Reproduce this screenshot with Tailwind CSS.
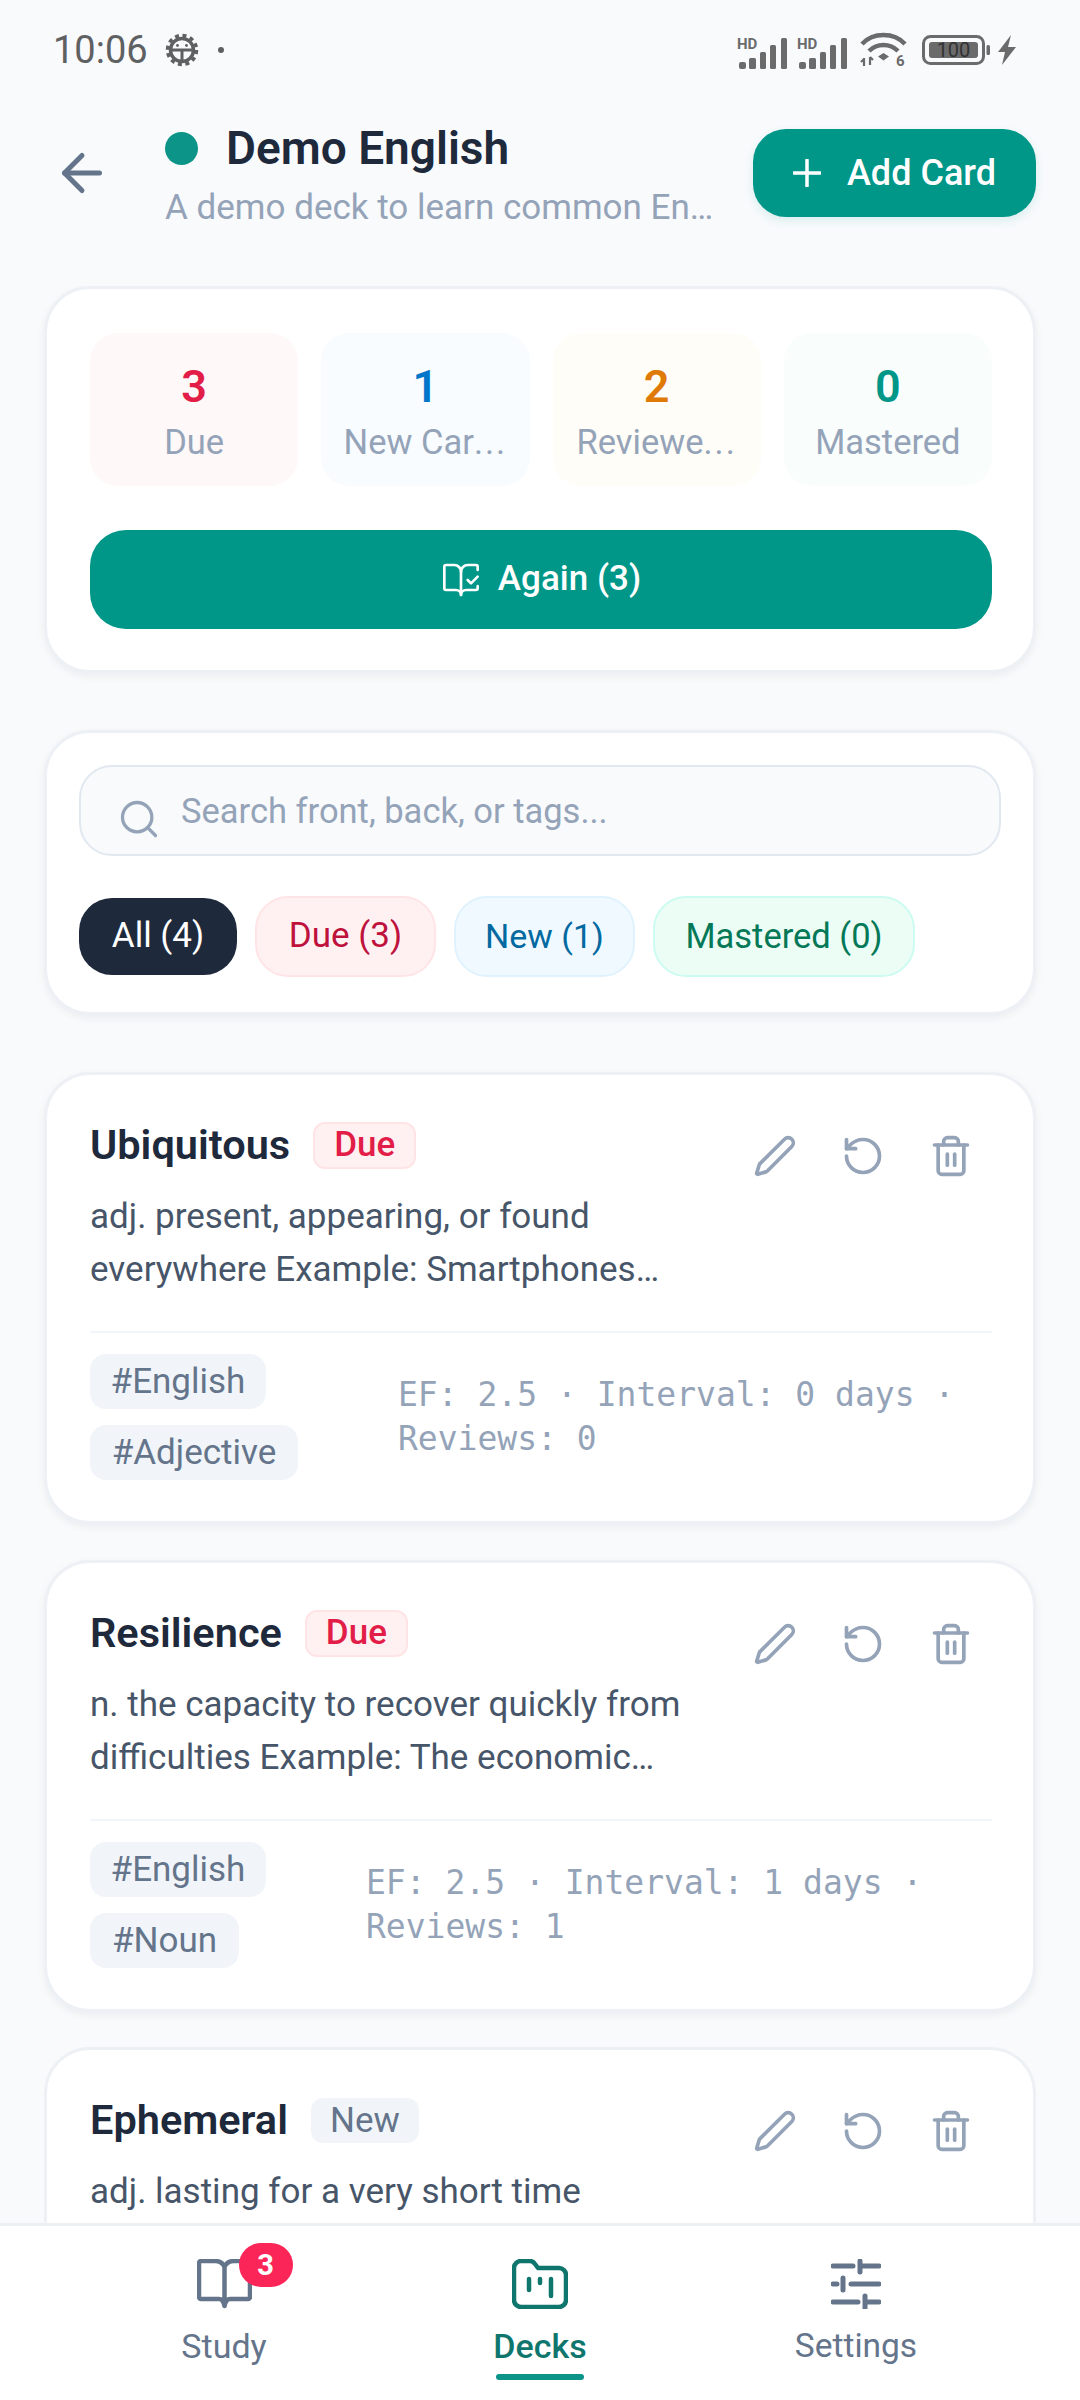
<!DOCTYPE html>
<html lang="en">
  <head>
    <meta charset="UTF-8" />
    <meta name="viewport" content="width=device-width, initial-scale=1.0" />
    <title>Demo English</title>
    <script src="https://cdn.jsdelivr.net/npm/@tailwindcss/browser@4"></script>
  </head>
  <body class="bg-[#f8fafc] text-[#1e293b] font-['Roboto',sans-serif]">
    <div class="w-[1080px] h-[2400px] flex flex-col overflow-hidden">
      <!-- Status bar -->
      <div class="h-[100px] shrink-0 flex items-center justify-between pl-[53px] pr-[63px] text-[#5f6062]">
        <div class="flex items-center">
          <span class="text-[38px] leading-none">10:06</span>
          <svg class="ml-[17px]" width="34" height="34" viewBox="0 0 34 34" fill="none" stroke="#5f6062">
            <circle cx="17" cy="17" r="11.5" stroke-width="3.5" />
            <circle cx="17" cy="17" r="14.5" stroke-width="3.5" stroke-dasharray="4 3.6" />
            <path d="M6 17h22M17 17v11" stroke-width="3" />
            <circle cx="12.5" cy="12.5" r="1.4" fill="#5f6062" stroke="none" />
            <circle cx="21.5" cy="12.5" r="1.4" fill="#5f6062" stroke="none" />
          </svg>
          <span class="ml-[19px] w-[6px] h-[6px] rounded-full bg-[#5f6062]"></span>
        </div>
        <div class="flex items-center">
          <svg width="50" height="38" viewBox="0 -6 50 38" fill="#6b6b6b">
            <text x="0" y="12" font-size="15" font-weight="700" font-family="Roboto">HD</text>
            <rect x="2" y="25" width="7" height="7" rx="2" />
            <rect x="12" y="21" width="7" height="11" rx="1.5" />
            <rect x="23" y="15" width="6" height="17" rx="1.5" />
            <rect x="33" y="8" width="6" height="24" rx="1.5" />
            <rect x="44" y="1" width="6" height="31" rx="1.5" />
          </svg>
          <svg class="ml-[10px]" width="50" height="38" viewBox="0 -6 50 38" fill="#6b6b6b">
            <text x="0" y="12" font-size="15" font-weight="700" font-family="Roboto">HD</text>
            <rect x="2" y="25" width="7" height="7" rx="2" />
            <rect x="12" y="21" width="7" height="11" rx="1.5" />
            <rect x="23" y="15" width="6" height="17" rx="1.5" />
            <rect x="33" y="8" width="6" height="24" rx="1.5" />
            <rect x="44" y="1" width="6" height="31" rx="1.5" />
          </svg>
          <svg class="ml-[13px] mt-[4px]" width="47" height="42" viewBox="0 0 47 42" fill="none" stroke="#6b6b6b">
            <path d="M2 13C13 1 34 1 45 13" stroke-width="4.5" />
            <path d="M9 20C17 12 30 12 38 20" stroke-width="4.5" />
            <path d="M18 25.500l5.500-3.500 5.500 3.500-5.500 4z" fill="#6b6b6b" stroke="none" />
            <path d="M4 27v8M1 31l3-3M10 26v8M10 26l3 3" stroke-width="2.200" />
            <text x="36" y="35" font-size="15" font-weight="700" font-family="Roboto" fill="#6b6b6b" stroke="none">6</text>
          </svg>
          <svg class="ml-[15px]" width="68" height="30" viewBox="0 0 68 30" fill="none">
            <rect x="1.500" y="1.500" width="60" height="27" rx="7" stroke="#6b6b6b" stroke-width="3" />
            <rect x="7" y="7" width="49" height="16" rx="3" fill="#6b6b6b" />
            <rect x="64.500" y="10" width="3.500" height="10" rx="1.500" fill="#6b6b6b" />
            <text x="31.500" y="22" text-anchor="middle" font-size="20" font-family="Roboto" fill="#333">100</text>
          </svg>
          <svg class="ml-[7px]" width="20" height="30" viewBox="0 0 20 30" fill="#6b6b6b">
            <path d="M14 0L1 17h7l-3 13L19 12h-8z" />
          </svg>
        </div>
      </div>

      <!-- Header -->
      <header class="shrink-0 h-[186px] flex items-start pt-[29px] pl-[52px] pr-[44px]">
        <svg class="mt-[14px]" width="60" height="60" viewBox="0 0 24 24" fill="none" stroke="#64748b" stroke-width="2" stroke-linecap="round" stroke-linejoin="round">
          <path d="m12 19-7-7 7-7" />
          <path d="M19 12H5" />
        </svg>
        <div class="ml-[53px] flex-1 min-w-0 -mt-[6px]">
          <div class="flex items-center gap-[28px] h-[50px]">
            <span class="w-[33px] h-[33px] rounded-full bg-[#0d9488]"></span>
            <h1 class="text-[46px] leading-none font-semibold">Demo English</h1>
          </div>
          <p class="text-[35px] leading-[44px] mt-[13px] text-[#94a3b8]">A demo deck to learn common En…</p>
        </div>
        <button class="w-[283px] h-[88px] rounded-[33px] bg-[#009688] text-white flex items-center justify-center gap-[26px] text-[36px] font-medium shadow-[0_4px_10px_rgba(0,150,136,0.12)]">
          <svg width="28" height="28" viewBox="0 0 28 28" fill="none" stroke="white" stroke-width="3.500" stroke-linecap="round">
            <path d="M14 1v26M1 14h26" />
          </svg>
          Add Card
        </button>
      </header>

      <main class="flex-1 min-h-0 overflow-hidden px-[44px] flex flex-col">
        <!-- Stats card -->
        <section class="shrink-0 h-[387px] bg-white rounded-[46px] border-[3px] border-[#edf1f5] shadow-[0_3px_8px_rgba(15,23,42,0.06)] pl-[43px] pr-[41px] pt-[44px]">
          <div class="grid grid-cols-4 gap-[23px]">
            <div class="h-[153px] rounded-[28px] bg-[#fff8f8] flex flex-col items-center pt-[29px]">
              <span class="text-[45px] leading-[50px] font-semibold text-[#e11d48]">3</span>
              <span class="text-[34.5px] leading-[44px] mt-[8px] text-[#94a3b8]">Due</span>
            </div>
            <div class="h-[153px] rounded-[28px] bg-[#f8fcff] flex flex-col items-center pt-[29px]">
              <span class="text-[45px] leading-[50px] font-semibold text-[#0277c9]">1</span>
              <span class="text-[34.5px] leading-[44px] mt-[8px] text-[#94a3b8]">New Car<span class="tracking-[2px]">...</span></span>
            </div>
            <div class="h-[153px] rounded-[28px] bg-[#fffdf7] flex flex-col items-center pt-[29px]">
              <span class="text-[45px] leading-[50px] font-semibold text-[#df7a07]">2</span>
              <span class="text-[34.5px] leading-[44px] mt-[8px] text-[#94a3b8]">Reviewe<span class="tracking-[2px]">...</span></span>
            </div>
            <div class="h-[153px] rounded-[28px] bg-[#f9fdfc] flex flex-col items-center pt-[29px]">
              <span class="text-[45px] leading-[50px] font-semibold text-[#009688]">0</span>
              <span class="text-[34.5px] leading-[44px] mt-[8px] text-[#94a3b8]">Mastered</span>
            </div>
          </div>
          <button class="mt-[44px] w-full h-[99px] rounded-[36px] bg-[#009688] text-white flex items-center justify-center gap-[17px] text-[35px] font-medium">
            <svg width="40" height="40" viewBox="0 0 24 24" fill="none" stroke="white" stroke-width="1.600" stroke-linecap="round" stroke-linejoin="round">
              <path d="M12 21V7" />
              <path d="m16 12 2 2 4-4" />
              <path d="M22 6V4a1 1 0 0 0-1-1h-5a4 4 0 0 0-4 4 4 4 0 0 0-4-4H3a1 1 0 0 0-1 1v13a1 1 0 0 0 1 1h6a3 3 0 0 1 3 3 3 3 0 0 1 3-3h6a1 1 0 0 0 1-1v-1.300" />
            </svg>
            Again (3)
          </button>
        </section>

        <!-- Search and filters -->
        <section class="shrink-0 mt-[57px] h-[285px] bg-white rounded-[46px] border-[3px] border-[#edf1f5] shadow-[0_3px_8px_rgba(15,23,42,0.06)] pl-[32px] pr-[32px] pt-[32px]">
          <div class="h-[91px] rounded-[33px] border-[2px] border-[#e2e8f0] bg-[#f8fafc] flex items-center pl-[36px]">
            <svg class="mt-[16px]" width="44" height="44" viewBox="0 0 24 24" fill="none" stroke="#94a3b8" stroke-width="1.800" stroke-linecap="round">
              <circle cx="11" cy="11" r="8" />
              <path d="m21 21-4.300-4.300" />
            </svg>
            <span class="ml-[20px] text-[34.5px] text-[#94a3b8] mt-[3px]">Search front, back, or tags...</span>
          </div>
          <div class="mt-[40px] flex items-center gap-[18px]">
            <button class="h-[77px] w-[158px] rounded-[33px] bg-[#1e293b] text-white text-[35px]">All (4)</button>
            <button class="h-[81px] w-[181px] rounded-[33px] bg-[#fff1f2] border-[2px] border-[#ffe4e6] text-[#be123c] text-[35px]">Due (3)</button>
            <button class="h-[81px] w-[181px] rounded-[33px] bg-[#f0f9ff] border-[2px] border-[#e0f2fe] text-[#0369a1] text-[34px]">New (1)</button>
            <button class="h-[81px] w-[262px] rounded-[33px] bg-[#ecfdf5] border-[2px] border-[#ccfbf1] text-[#047857] text-[34.5px]">Mastered (0)</button>
          </div>
        </section>

        <!-- Card 1 -->
        <article class="shrink-0 mt-[57px] h-[452px] bg-white rounded-[46px] border-[3px] border-[#edf1f5] shadow-[0_3px_8px_rgba(15,23,42,0.06)] pl-[43px] pr-[41px] pt-[45px]">
          <div class="flex items-start justify-between">
            <div>
              <div class="flex items-center gap-[23px] h-[50px]">
                <h3 class="text-[41.5px] leading-none font-semibold">Ubiquitous</h3>
                <span class="h-[47px] px-[19px] rounded-[12px] bg-[#fff1f2] border-[2px] border-[#ffe4e6] text-[#e11d48] text-[35px] leading-[42px] font-medium">Due</span>
              </div>
              <p class="mt-[20px] text-[35px] leading-[53px] text-[#475569]">adj. present, appearing, or found<br />everywhere Example: Smartphones…</p>
            </div>
            <div class="flex gap-[44px] pr-[19px] pt-[14px]">
              <svg width="44" height="44" viewBox="0 0 24 24" fill="none" stroke="#94a3b8" stroke-width="2" stroke-linecap="round" stroke-linejoin="round"><path d="M21.174 6.812a1 1 0 0 0-3.986-3.987L3.842 16.174a2 2 0 0 0-.5.83l-1.321 4.352a.5.5 0 0 0 .623.622l4.353-1.32a2 2 0 0 0 .83-.497z" /></svg>
              <svg width="44" height="44" viewBox="0 0 24 24" fill="none" stroke="#94a3b8" stroke-width="2" stroke-linecap="round" stroke-linejoin="round"><path d="M3 12a9 9 0 1 0 9-9 9.750 9.750 0 0 0-6.740 2.740L3 8" /><path d="M3 3v5h5" /></svg>
              <svg width="44" height="44" viewBox="0 0 24 24" fill="none" stroke="#94a3b8" stroke-width="2" stroke-linecap="round" stroke-linejoin="round"><path d="M3 6h18" /><path d="M19 6v14c0 1-1 2-2 2H7c-1 0-2-1-2-2V6" /><path d="M8 6V4c0-1 1-2 2-2h4c1 0 2 1 2 2v2" /><path d="M10 11v6" /><path d="M14 11v6" /></svg>
            </div>
          </div>
          <div class="mt-[35px] border-t-[2px] border-[#f1f5f9] pt-[21px] flex items-start">
            <div class="shrink-0 flex flex-col items-start gap-[16px]">
              <span class="h-[55px] w-[176px] text-center rounded-[16px] bg-[#f1f5f9] text-[#64748b] text-[35px] leading-[55px]">#English</span>
              <span class="h-[55px] w-[208px] text-center rounded-[16px] bg-[#f1f5f9] text-[#64748b] text-[35px] leading-[55px]">#Adjective</span>
            </div>
            <p class="ml-[100px] mt-[19px] font-['DejaVu_Sans_Mono',monospace] text-[33px] leading-[44px] text-[#94a3b8]">EF: 2.5 · Interval: 0 days · Reviews: 0</p>
          </div>
        </article>

        <!-- Card 2 -->
        <article class="shrink-0 mt-[36px] h-[452px] bg-white rounded-[46px] border-[3px] border-[#edf1f5] shadow-[0_3px_8px_rgba(15,23,42,0.06)] pl-[43px] pr-[41px] pt-[45px]">
          <div class="flex items-start justify-between">
            <div>
              <div class="flex items-center gap-[23px] h-[50px]">
                <h3 class="text-[41.5px] leading-none font-semibold">Resilience</h3>
                <span class="h-[47px] px-[19px] rounded-[12px] bg-[#fff1f2] border-[2px] border-[#ffe4e6] text-[#e11d48] text-[35px] leading-[42px] font-medium">Due</span>
              </div>
              <p class="mt-[20px] text-[35px] leading-[53px] text-[#475569]">n. the capacity to recover quickly from<br />difficulties Example: The economic…</p>
            </div>
            <div class="flex gap-[44px] pr-[19px] pt-[14px]">
              <svg width="44" height="44" viewBox="0 0 24 24" fill="none" stroke="#94a3b8" stroke-width="2" stroke-linecap="round" stroke-linejoin="round"><path d="M21.174 6.812a1 1 0 0 0-3.986-3.987L3.842 16.174a2 2 0 0 0-.5.83l-1.321 4.352a.5.5 0 0 0 .623.622l4.353-1.32a2 2 0 0 0 .83-.497z" /></svg>
              <svg width="44" height="44" viewBox="0 0 24 24" fill="none" stroke="#94a3b8" stroke-width="2" stroke-linecap="round" stroke-linejoin="round"><path d="M3 12a9 9 0 1 0 9-9 9.750 9.750 0 0 0-6.740 2.740L3 8" /><path d="M3 3v5h5" /></svg>
              <svg width="44" height="44" viewBox="0 0 24 24" fill="none" stroke="#94a3b8" stroke-width="2" stroke-linecap="round" stroke-linejoin="round"><path d="M3 6h18" /><path d="M19 6v14c0 1-1 2-2 2H7c-1 0-2-1-2-2V6" /><path d="M8 6V4c0-1 1-2 2-2h4c1 0 2 1 2 2v2" /><path d="M10 11v6" /><path d="M14 11v6" /></svg>
            </div>
          </div>
          <div class="mt-[35px] border-t-[2px] border-[#f1f5f9] pt-[21px] flex items-start">
            <div class="shrink-0 flex flex-col items-start gap-[16px]">
              <span class="h-[55px] w-[176px] text-center rounded-[16px] bg-[#f1f5f9] text-[#64748b] text-[35px] leading-[55px]">#English</span>
              <span class="h-[55px] w-[149px] text-center rounded-[16px] bg-[#f1f5f9] text-[#64748b] text-[35px] leading-[55px]">#Noun</span>
            </div>
            <p class="ml-[100px] mt-[19px] font-['DejaVu_Sans_Mono',monospace] text-[33px] leading-[44px] text-[#94a3b8]">EF: 2.5 · Interval: 1 days · Reviews: 1</p>
          </div>
        </article>

        <!-- Card 3, runs under the nav -->
        <article class="shrink-0 mt-[35px] h-[452px] bg-white rounded-[46px] border-[3px] border-[#edf1f5] pl-[43px] pr-[41px] pt-[45px]">
          <div class="flex items-start justify-between">
            <div>
              <div class="flex items-center gap-[23px] h-[50px]">
                <h3 class="text-[41.5px] leading-none font-semibold">Ephemeral</h3>
                <span class="h-[45px] px-[19px] rounded-[12px] bg-[#f1f5f9] text-[#64748b] text-[35px] leading-[45px]">New</span>
              </div>
              <p class="mt-[20px] text-[35px] leading-[53px] text-[#475569]">adj. lasting for a very short time</p>
            </div>
            <div class="flex gap-[44px] pr-[19px] pt-[14px]">
              <svg width="44" height="44" viewBox="0 0 24 24" fill="none" stroke="#94a3b8" stroke-width="2" stroke-linecap="round" stroke-linejoin="round"><path d="M21.174 6.812a1 1 0 0 0-3.986-3.987L3.842 16.174a2 2 0 0 0-.5.83l-1.321 4.352a.5.5 0 0 0 .623.622l4.353-1.32a2 2 0 0 0 .83-.497z" /></svg>
              <svg width="44" height="44" viewBox="0 0 24 24" fill="none" stroke="#94a3b8" stroke-width="2" stroke-linecap="round" stroke-linejoin="round"><path d="M3 12a9 9 0 1 0 9-9 9.750 9.750 0 0 0-6.740 2.740L3 8" /><path d="M3 3v5h5" /></svg>
              <svg width="44" height="44" viewBox="0 0 24 24" fill="none" stroke="#94a3b8" stroke-width="2" stroke-linecap="round" stroke-linejoin="round"><path d="M3 6h18" /><path d="M19 6v14c0 1-1 2-2 2H7c-1 0-2-1-2-2V6" /><path d="M8 6V4c0-1 1-2 2-2h4c1 0 2 1 2 2v2" /><path d="M10 11v6" /><path d="M14 11v6" /></svg>
            </div>
          </div>
        </article>
      </main>

      <!-- Bottom nav -->
      <nav class="shrink-0 h-[177px] bg-white border-t-[3px] border-[#eef1f4] px-[66px] grid grid-cols-3 text-[34px]">
        <a class="flex flex-col items-center pt-[33px] text-[#64748b]">
          <span class="relative h-[50px]">
            <svg width="55" height="50" viewBox="0 0 55 50" fill="none" stroke="#64748b" stroke-width="4.500" stroke-linejoin="round">
              <path d="M27.500 8Q25 2 18 2H4a2 2 0 0 0-2 2V38a2 2 0 0 0 2 2H22Q26 40 27.500 47Q29 40 33 40H51a2 2 0 0 0 2-2V4a2 2 0 0 0-2-2H37Q30 2 27.500 8ZM27.500 8V46" />
            </svg>
            <span class="absolute left-[42px] -top-[16px] w-[54px] h-[44px] rounded-full bg-[#fb2557] text-white text-[29px] leading-[44px] font-bold text-center">3</span>
          </span>
          <span class="mt-[12px] leading-[50px]">Study</span>
        </a>
        <a class="flex flex-col items-center pt-[33px] text-[#0f766e] font-medium">
          <svg width="56" height="50" viewBox="0 0 56 50" fill="none" stroke="#0f766e" stroke-width="4.500" stroke-linecap="round" stroke-linejoin="round">
            <path d="M2 9a7 7 0 0 1 7-7h9q3 0 5 3l3 4h21a7 7 0 0 1 7 7v25a7 7 0 0 1-7 7H9a7 7 0 0 1-7-7z" />
            <path d="M17 20v11M28 20v4M39 20v17" />
          </svg>
          <span class="mt-[12px] leading-[50px]">Decks</span>
          <span class="mt-[3px] w-[88px] h-[6px] rounded-full bg-[#0d9488]"></span>
        </a>
        <a class="flex flex-col items-center pt-[33px] text-[#64748b]">
          <svg width="50" height="50" viewBox="0 0 50 50" fill="none" stroke="#64748b" stroke-width="5" stroke-linecap="round">
            <path d="M2 7h20M29 2v11M29 7h19M2 25h4M12 19v12M20 25h28M2 43h25M34 37v12M34 43h14" />
          </svg>
          <span class="mt-[12px] leading-[50px] text-[33.5px]">Settings</span>
        </a>
      </nav>
    </div>
  </body>
</html>
